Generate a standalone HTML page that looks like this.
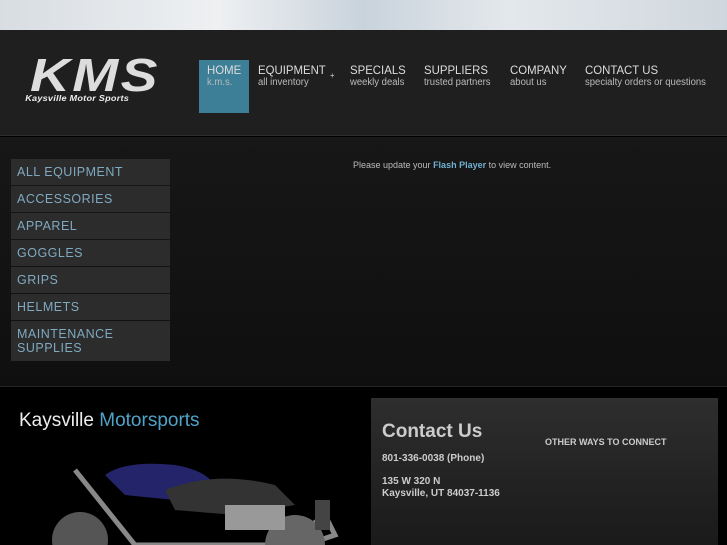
<!DOCTYPE html>
<html><head><style>
*{margin:0;padding:0;box-sizing:border-box}
html,body{width:727px;height:545px;overflow:hidden}
body{background:#000;font-family:"Liberation Sans",sans-serif;position:relative}
.top{position:absolute;left:0;top:0;width:727px;height:30px;background:linear-gradient(90deg,#d8dde2,#eef0f2 30%,#c9d3dc 50%,#e4e8ec 70%,#cfd7de)}
.hdr{position:absolute;left:0;top:30px;width:727px;height:106px;background:#1f1f1f;border-bottom:1px solid #2c2c2c}
.mid{position:absolute;left:0;top:137px;width:727px;height:250px;background:linear-gradient(#171717,#0f0f0f);border-bottom:1px solid #242424}
.logo{position:absolute;left:30px;top:56px;width:140px;color:#ddd;font:italic 900 46px/38px "Liberation Sans",sans-serif;letter-spacing:2px;transform:scaleX(1.2);transform-origin:left}
.logo small{display:block;font:italic bold 8px/10px "Liberation Sans",sans-serif;letter-spacing:0.2px;color:#eee;transform:scaleX(0.95);transform-origin:left;margin-left:-4px}
.nav{position:absolute;top:64px;color:#ddd;font-size:12px;line-height:12px;transform:scaleX(0.95);transform-origin:left}
.nav span{display:block;font-size:10px;color:#bbb;line-height:11px;margin-top:1px}
.home{position:absolute;left:199px;top:60px;width:50px;height:53px;background:#3e7f98}
.menu{position:absolute;left:11px;width:159px;background:#2c2c2c;color:#7fa9c0;font-size:12.5px;line-height:14px;padding:6px 6px;letter-spacing:0.5px}
.flash{position:absolute;left:353px;top:160px;font-size:9px;color:#bbb}
.flash b{color:#6fb0d0}
.box{position:absolute;left:371px;top:398px;width:347px;height:147px;background:linear-gradient(#2e2e2e,#1a1a1a)}
</style></head><body>
<div class="top"></div>
<div class="hdr"></div>
<div class="mid"></div>
<div class="logo">KMS<small>Kaysville Motor Sports</small></div>
<div class="home"></div>
<div class="nav" style="left:207px">HOME<span>k.m.s.</span></div>
<div class="nav" style="left:258px">EQUIPMENT<span>all inventory</span></div>
<div class="nav" style="left:330px;top:70px;font-size:8px">+</div>
<div class="nav" style="left:350px">SPECIALS<span>weekly deals</span></div>
<div class="nav" style="left:424px">SUPPLIERS<span>trusted partners</span></div>
<div class="nav" style="left:510px">COMPANY<span>about us</span></div>
<div class="nav" style="left:585px">CONTACT US<span>specialty orders or questions</span></div>
<div class="menu" style="top:159px;height:26px">ALL EQUIPMENT</div>
<div class="menu" style="top:186px;height:26px">ACCESSORIES</div>
<div class="menu" style="top:213px;height:26px">APPAREL</div>
<div class="menu" style="top:240px;height:26px">GOGGLES</div>
<div class="menu" style="top:267px;height:26px">GRIPS</div>
<div class="menu" style="top:294px;height:26px">HELMETS</div>
<div class="menu" style="top:321px;height:40px">MAINTENANCE<br>SUPPLIES</div>
<div class="flash">Please update your <b>Flash Player</b> to view content.</div>
<div style="position:absolute;left:19px;top:410px;font-size:19px;color:#eee">Kaysville <span style="color:#4fa3c8">Motorsports</span></div>
<svg style="position:absolute;left:35px;top:445px" width="310" height="100">
<path d="M70 30 Q90 15 140 20 Q170 25 180 40 L140 55 L90 50 Z" fill="#24246a"/>
<path d="M130 45 Q180 25 240 40 L260 60 L200 70 L140 65Z" fill="#333"/>
<path d="M40 25 L100 100 L250 100 L290 70 L300 90 L270 100" fill="none" stroke="#888" stroke-width="5"/>
<circle cx="45" cy="95" r="28" fill="#555"/>
<circle cx="260" cy="100" r="30" fill="#666"/>
<rect x="190" y="60" width="60" height="25" fill="#999"/>
<rect x="280" y="55" width="15" height="30" fill="#444"/>
</svg>
<div class="box">
<div style="position:absolute;left:11px;top:23px;font-size:19px;font-weight:bold;color:#ccc">Contact Us</div>
<div style="position:absolute;left:174px;top:39px;font-size:9px;font-weight:bold;color:#ccc">OTHER WAYS TO CONNECT</div>
<div style="position:absolute;left:11px;top:55px;font-size:10px;font-weight:bold;color:#ccc">801-336-0038 (Phone)</div>
<div style="position:absolute;left:11px;top:78px;font-size:10px;font-weight:bold;color:#ccc;line-height:12px">135 W 320 N<br>Kaysville, UT 84037-1136</div>
</div>
</body></html>
